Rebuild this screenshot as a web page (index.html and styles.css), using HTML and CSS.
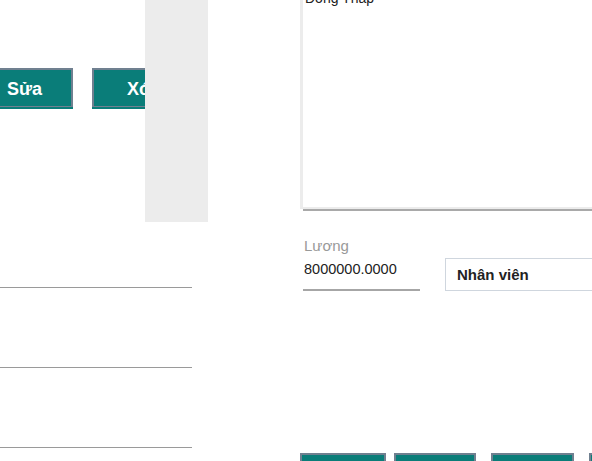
FILE: index.html
```html
<!DOCTYPE html>
<html lang="vi">
<head>
<meta charset="utf-8">
<title>Nhân viên</title>
<link rel="stylesheet" href="styles.css">
</head>
<body>
<div class="page">
  <section class="left">
    <div class="top">
      <div class="actions">
        <button class="btn btn-lg">Sửa</button>
        <button class="btn btn-lg btn-delete">Xóa</button>
      </div>
      <aside class="panel"></aside>
    </div>
    <div class="lines">
      <div class="line"></div>
      <div class="line"></div>
      <div class="line"></div>
    </div>
  </section>
  <section class="right">
    <div class="textarea">Đồng Tháp</div>
    <div class="fields">
      <div class="field">
        <div class="label">Lương</div>
        <div class="value">8000000.0000</div>
      </div>
      <div class="select">Nhân viên</div>
    </div>
    <div class="bottom-actions">
      <button class="btn btn-sm btn-1"></button>
      <button class="btn btn-sm btn-2"></button>
      <button class="btn btn-sm btn-3"></button>
      <button class="btn btn-sm btn-4"></button>
    </div>
  </section>
</div>
</body>
</html>
```

FILE: styles.css
```css
html, body {
  margin: 0;
  padding: 0;
  background: #ffffff;
}
body {
  width: 592px;
  height: 461px;
  overflow: hidden;
  font-family: "Liberation Sans", Arial, sans-serif;
  color: #222222;
}
.page {
  display: flex;
  align-items: flex-start;
}
.left {
  flex: none;
  width: 208px;
}
.top {
  display: flex;
  height: 222px;
}
.actions {
  flex: none;
  width: 169px;
  margin-left: -24px;
  padding-top: 68px;
  display: flex;
  align-items: flex-start;
  gap: 19px;
}
.btn {
  flex: none;
  margin: 0;
  padding: 0;
  background: #0a7d79;
  border: 2px solid #708090;
  color: #ffffff;
  font-family: "Liberation Sans", Arial, sans-serif;
  font-weight: bold;
  box-sizing: border-box;
}
.btn-lg {
  width: 97px;
  height: 39px;
  padding-top: 3px;
  border-bottom-width: 1px;
  box-shadow: 0 2px 0 #0a7d79;
  font-size: 18px;
  text-align: center;
}
.btn-delete {
  padding-left: 6px;
}
.panel {
  flex: none;
  width: 63px;
  background: #ececec;
  position: relative;
  z-index: 1;
}
.lines {
  display: flex;
  flex-direction: column;
  gap: 79px;
  width: 192px;
}
.line {
  border-bottom: 1px solid #9a9a9a;
}
.line:first-child {
  margin-top: 65px;
}
.right {
  flex: none;
  width: 400px;
  margin-left: 92px;
}
.textarea {
  box-sizing: border-box;
  width: 320px;
  height: 229px;
  margin-top: -20px;
  padding: 7px 2px;
  border: 3px solid #ececec;
  border-bottom-width: 2px;
  box-shadow: 3px 2px 0 #a9a9a9;
  font-size: 14px;
  line-height: 16px;
  color: #222222;
}
.fields {
  display: flex;
  align-items: flex-end;
  gap: 25px;
  margin-top: 28px;
}
.field {
  width: 117px;
  margin-left: 3px;
  border-bottom: 2px solid #a6a6a6;
}
.label {
  padding-left: 1px;
  font-size: 15px;
  line-height: 18px;
  color: #999999;
}
.value {
  margin-top: 5px;
  padding-left: 1px;
  padding-bottom: 11px;
  font-size: 14.5px;
  line-height: 18px;
  color: #222222;
}
.select {
  box-sizing: border-box;
  width: 160px;
  height: 33px;
  padding-left: 11px;
  border: 1px solid #cfd6de;
  display: flex;
  align-items: center;
  font-size: 15px;
  font-weight: bold;
  color: #222222;
}
.bottom-actions {
  display: flex;
  margin-top: 162px;
}
.btn-sm {
  height: 30px;
}
.btn-1 { width: 86px; margin-right: 8px; }
.btn-2 { width: 82px; margin-right: 15px; }
.btn-3 { width: 83px; margin-right: 15px; }
.btn-4 { width: 80px; }
```
